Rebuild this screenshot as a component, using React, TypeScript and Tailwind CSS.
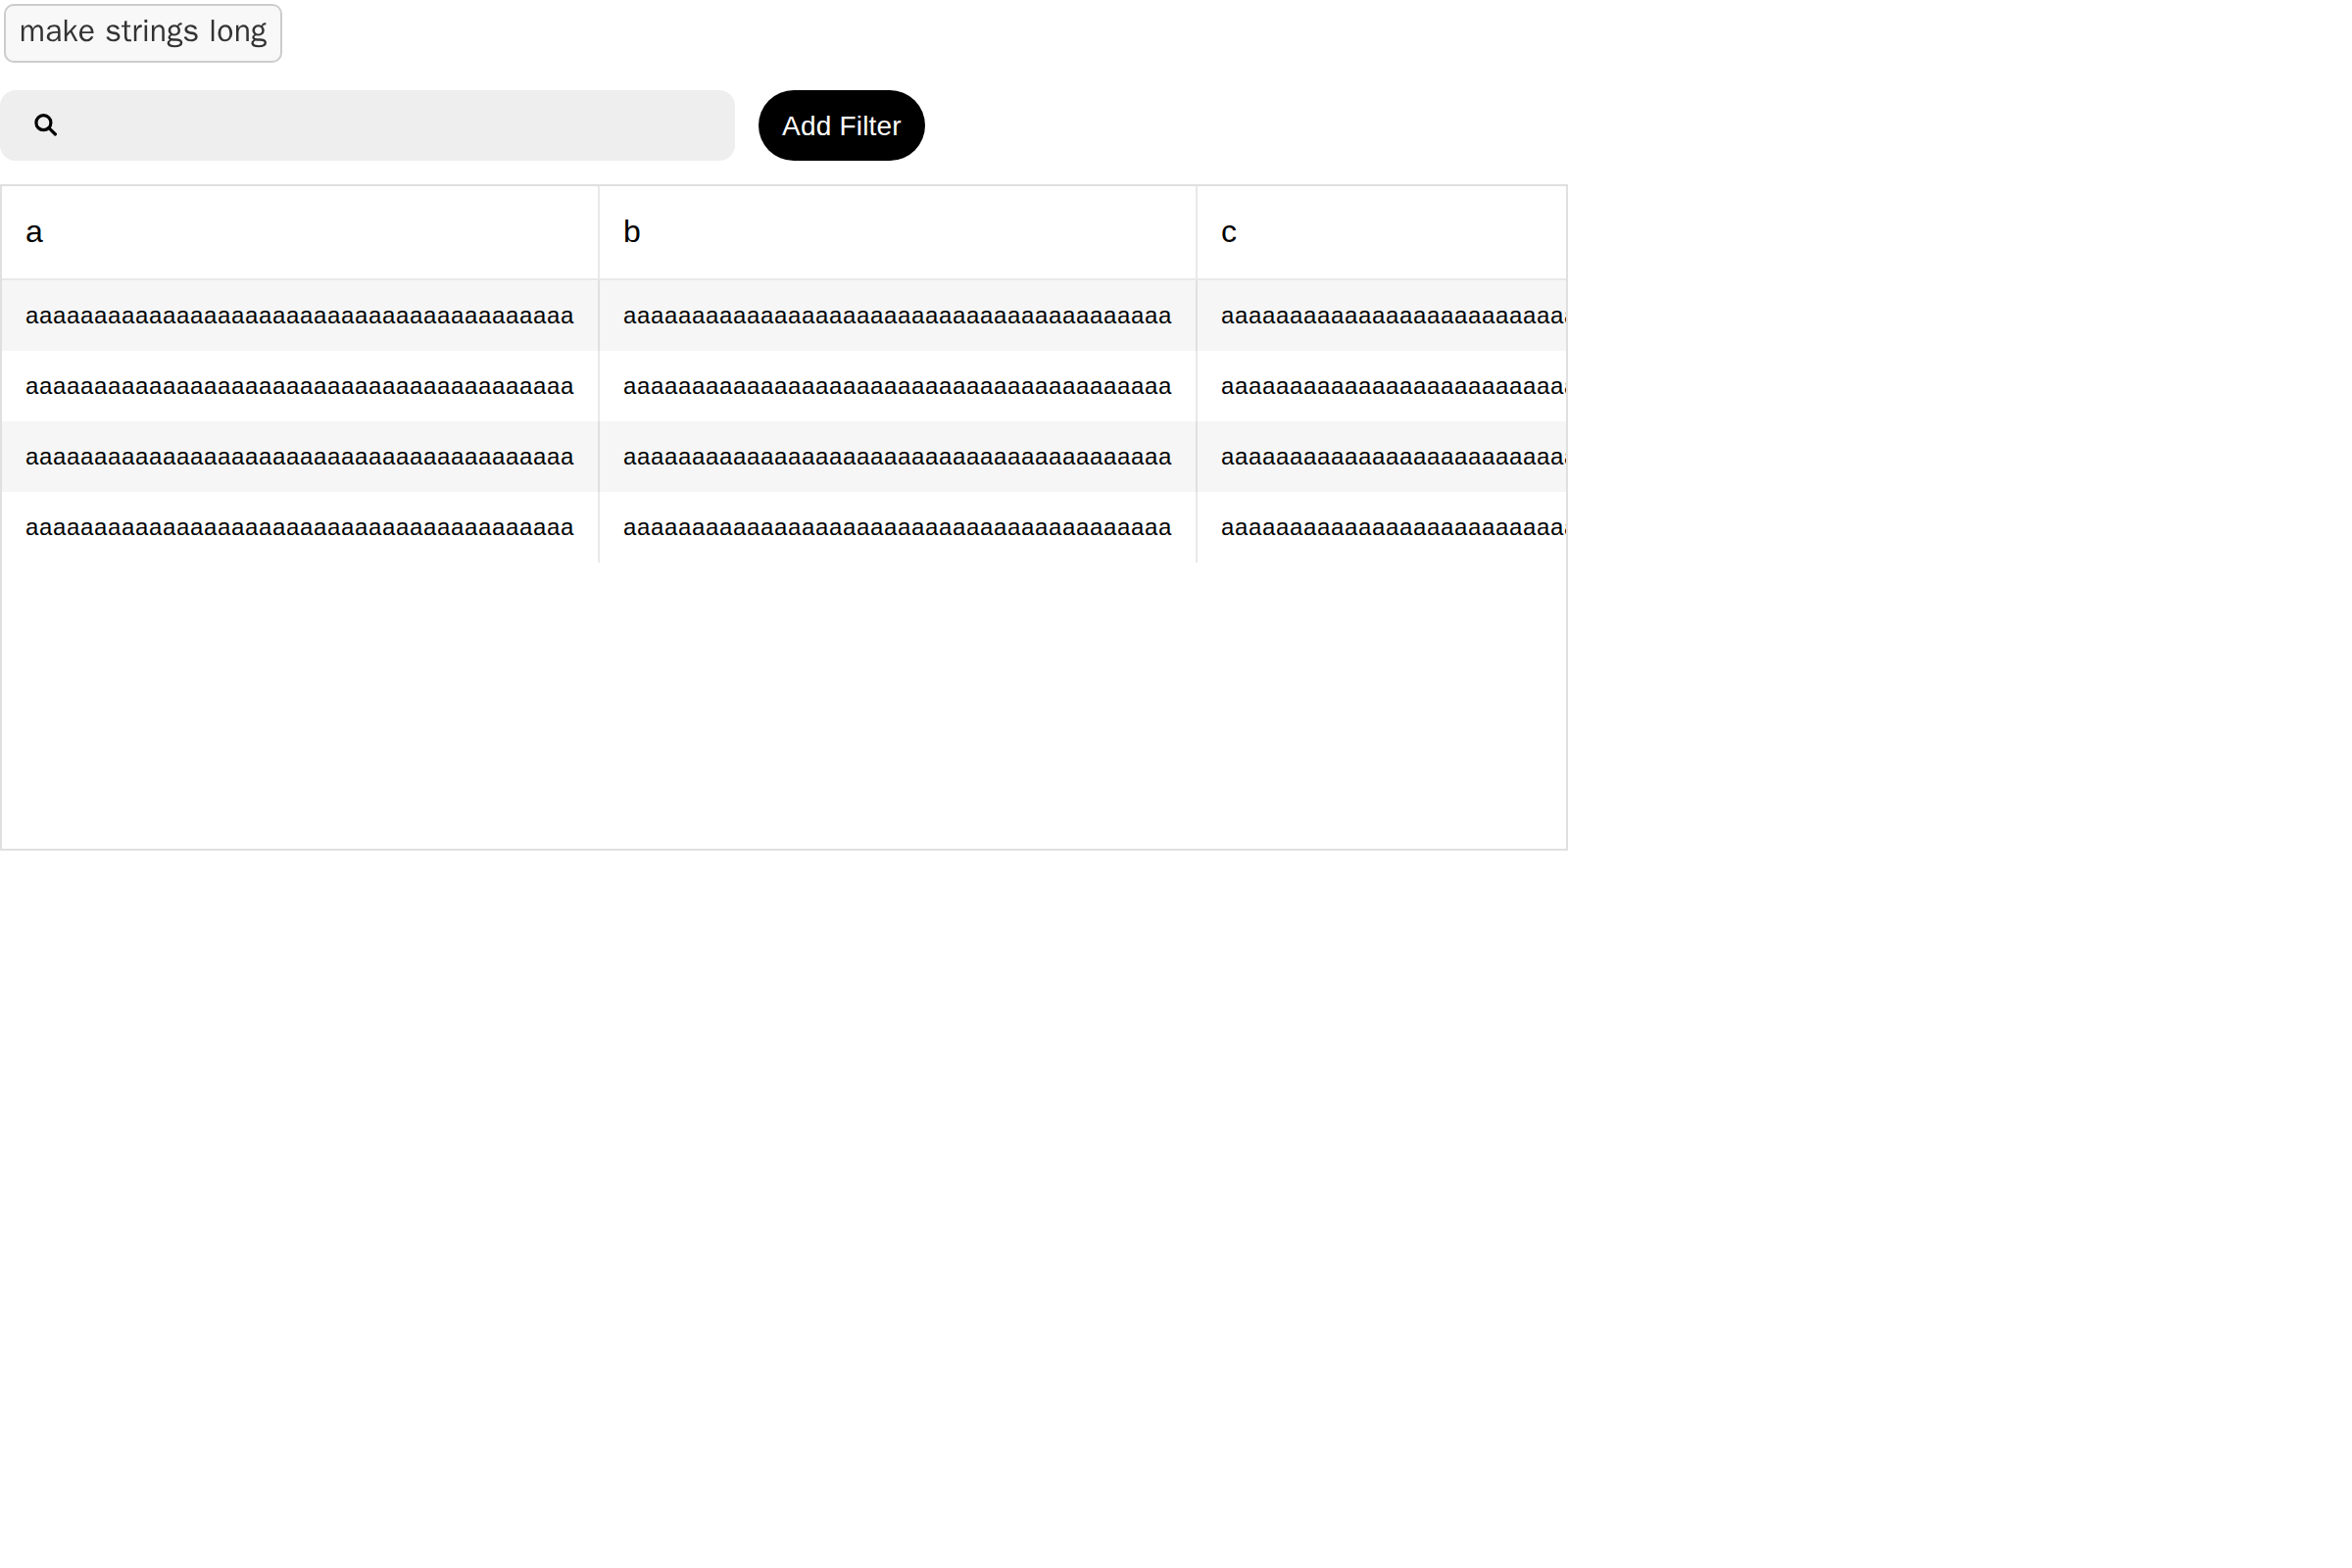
const cell = "a".repeat(40);
const columns = ["a", "b", "c"];
const rows = [0, 1, 2, 3];

export default function App() {
  return (
    <div className="h-[1600px] w-[2400px] overflow-hidden bg-white font-['Liberation_Sans',Arial,sans-serif] text-black">
      <button className="mt-1 ml-1 flex h-[60px] w-[284px] items-start justify-center rounded-[10px] border-2 border-[#ccc] bg-[#f8f8f8] pt-0.5 font-['WenQuanYi_Zen_Hei','Open_Sans',sans-serif] text-[32px] leading-[48px] tracking-[0.24px] whitespace-nowrap text-[#333]">
        make strings long
      </button>
      <div className="mt-7 flex gap-6">
        <div className="flex h-[72px] w-[750px] items-center rounded-2xl bg-[#eee] pl-[34px]">
          <svg className="mb-0.5 size-6" viewBox="0 0 24 24" fill="none" stroke="currentColor" strokeWidth="3.2" strokeLinecap="round">
            <circle cx="10.4" cy="10.2" r="7.5" />
            <path d="M15.9 15.7 22.4 22" />
          </svg>
        </div>
        <button className="h-[72px] w-[170px] rounded-full bg-black pt-0.5 text-[28px] tracking-[0.2px] whitespace-nowrap text-white">Add Filter</button>
      </div>
      <div className="mt-6 h-[680px] w-[1600px] overflow-hidden border-2 border-[#e0e0e0]">
        <div className="flex w-[1830px] border-b-2 border-[#e9e9e9]">
          {columns.map((c) => (
            <div key={c} className="h-[94px] w-[610px] shrink-0 border-r-2 border-[#e9e9e9] pl-6 text-[32px] leading-[92px]">{c}</div>
          ))}
        </div>
        {rows.map((r) => (
          <div key={r} className="flex w-[1830px] odd:bg-white even:bg-[#f6f6f6]">
            {columns.map((c) => (
              <div key={c} className="h-[72px] w-[610px] shrink-0 border-r-2 border-black/[0.086] pl-6 text-[24px] leading-[71px] tracking-[0.653px]">{cell}</div>
            ))}
          </div>
        ))}
      </div>
    </div>
  );
}
